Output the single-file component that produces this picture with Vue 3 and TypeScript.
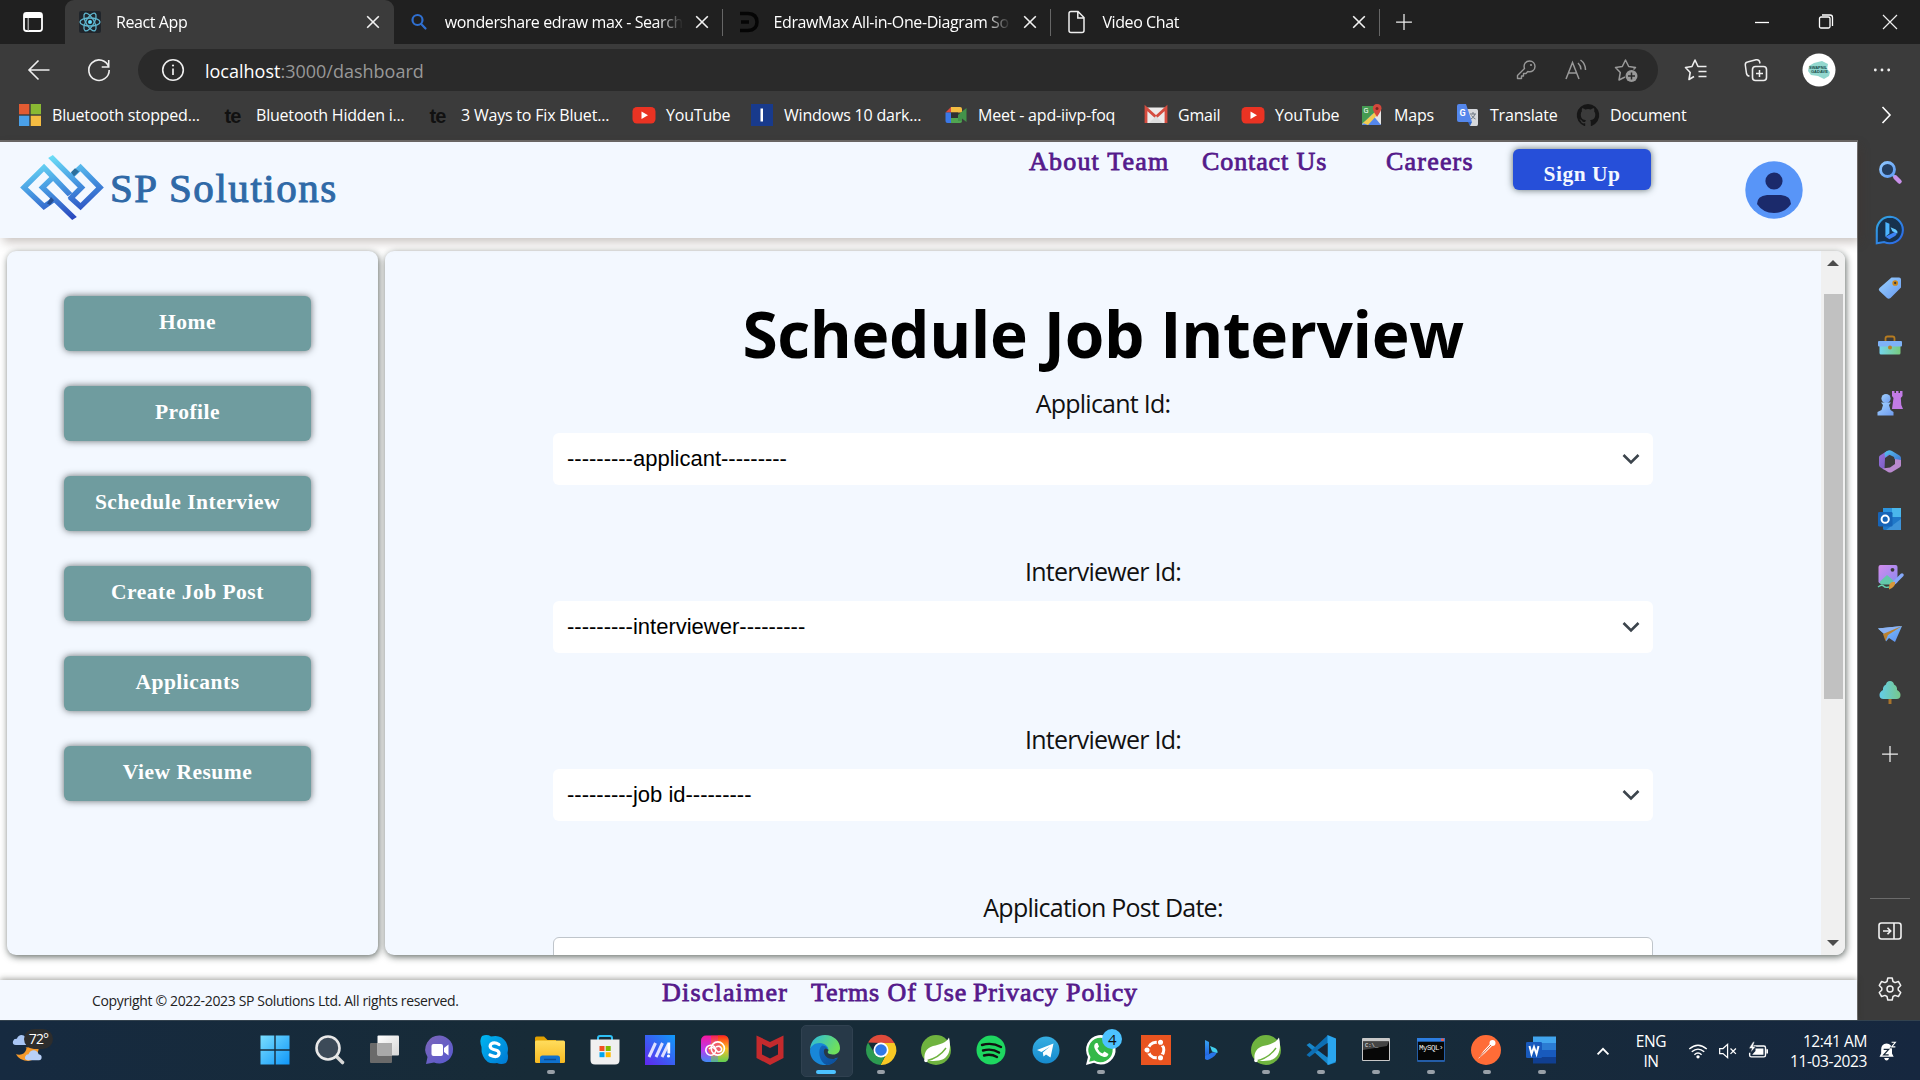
<script setup lang="ts">
interface Tab { icon: string; title: string; active?: boolean }
interface Bookmark { icon: string; label: string; width: number }
interface TaskItem { icon: string; running?: boolean; active?: boolean; badge?: number }

const tabs: Tab[] = [
  { icon: 'react', title: 'React App', active: true },
  { icon: 'searchBlue', title: 'wondershare edraw max - Search' },
  { icon: 'edraw', title: 'EdrawMax All-in-One-Diagram So' },
  { icon: 'file', title: 'Video Chat' },
]

const bookmarks: Bookmark[] = [
  { icon: 'microsoft', label: 'Bluetooth stopped...', width: 204 },
  { icon: 'te', label: 'Bluetooth Hidden i...', width: 205 },
  { icon: 'te', label: '3 Ways to Fix Bluet...', width: 205 },
  { icon: 'youtube', label: 'YouTube', width: 118 },
  { icon: 'bluebar', label: 'Windows 10 dark...', width: 194 },
  { icon: 'meet', label: 'Meet - apd-iivp-foq', width: 200 },
  { icon: 'gmail', label: 'Gmail', width: 97 },
  { icon: 'youtube', label: 'YouTube', width: 119 },
  { icon: 'maps', label: 'Maps', width: 96 },
  { icon: 'translate', label: 'Translate', width: 120 },
  { icon: 'github', label: 'Document', width: 130 },
]

const menu = ['Home', 'Profile', 'Schedule Interview', 'Create Job Post', 'Applicants', 'View Resume']

const fields = [
  { label: 'Applicant Id:', value: '---------applicant---------' },
  { label: 'Interviewer Id:', value: '---------interviewer---------' },
  { label: 'Interviewer Id:', value: '---------job id---------' },
]

const sideIcons = ['sbSearch', 'sbBing', 'sbTag', 'sbTools', 'sbChess', 'sb365', 'sbOutlook', 'sbImage', 'sbPlane', 'sbTree']

const tasks: TaskItem[] = [
  { icon: 'start' }, { icon: 'tSearch' }, { icon: 'taskview' }, { icon: 'chat' }, { icon: 'skype' },
  { icon: 'explorer', running: true }, { icon: 'store' }, { icon: 'myasus' }, { icon: 'cc' }, { icon: 'mcafee' },
  { icon: 'edge', running: true, active: true }, { icon: 'chrome', running: true }, { icon: 'spring' },
  { icon: 'spotify' }, { icon: 'telegram' }, { icon: 'whatsapp', running: true, badge: 4 }, { icon: 'ubuntu' },
  { icon: 'bing' }, { icon: 'spring', running: true }, { icon: 'vscode', running: true }, { icon: 'cmd', running: true },
  { icon: 'mysql', running: true }, { icon: 'postman', running: true }, { icon: 'word', running: true },
]

const grad = (id: string, a: string, b: string, dir = 'x2="1" y2="1"') =>
  `<linearGradient id="${id}" ${dir}><stop stop-color="${a}"/><stop offset="1" stop-color="${b}"/></linearGradient>`

// Browser icons share a 24-unit box, taskbar icons a 32-unit box.
const icons: Record<string, string> = {
  workspace: '<rect x="3" y="3" width="18" height="18" rx="2.5" fill="none" stroke="#fff" stroke-width="1.8"/><path d="M3 4.5Q4 3 6 3H18Q21 3 21 6V8H3Z" fill="#fff"/><path d="M7.2 8V21" stroke="#bbb" stroke-width="1.2"/>',
  react: '<rect x="1" y="1" width="22" height="22" rx="2" fill="#20252b"/><g fill="none" stroke="#61b8d0" stroke-width="1.3"><ellipse cx="12" cy="12" rx="10" ry="4"/><ellipse cx="12" cy="12" rx="10" ry="4" transform="rotate(60 12 12)"/><ellipse cx="12" cy="12" rx="10" ry="4" transform="rotate(120 12 12)"/></g><circle cx="12" cy="12" r="2" fill="#61dafb"/>',
  searchBlue: '<g fill="none" stroke="#2f6fd0" stroke-width="2.2" stroke-linecap="round"><circle cx="10.5" cy="10" r="5"/><path d="M14.2 14L18.5 18.5"/></g>',
  edraw: '<path d="M4 3.500H12Q21 4 21 12T12 20.500H4M5 12H13" fill="none" stroke="#050505" stroke-width="3.500"/>',
  file: '<path d="M5 3.500Q5 1.500 7 1.500H14L20 7.500V20.500Q20 22.500 18 22.500H7Q5 22.500 5 20.500ZM13.800 1.800V8H19.800" fill="none" stroke="#eee" stroke-width="1.500"/>',
  close: '<path d="M6.200 6.200L17.800 17.800M17.800 6.200L6.200 17.800" stroke="#f2f2f2" stroke-width="1.600"/>',
  plus: '<path d="M12 2.500V21.500M2.500 12H21.500" stroke="#eee" stroke-width="1.500"/>',
  back: '<path d="M22.500 12H2M11.500 2.500L2 12L11.500 21.500" fill="none" stroke="#eee" stroke-width="1.600"/>',
  reload: '<path d="M21.700 9A10.200 10.200 0 1 0 22.200 12M21.700 2V9H14.700" fill="none" stroke="#eee" stroke-width="1.600"/>',
  info: '<circle cx="12" cy="12" r="10.300" fill="none" stroke="#eee" stroke-width="1.600"/><path d="M12 10.500V17" stroke="#eee" stroke-width="1.700"/><circle cx="12" cy="7.500" r="1.100" fill="#eee"/>',
  key: '<path d="M10.500 10.500C9 6 12 3 15.500 3C19 3 21 5.500 21 8.500C21 12 18 14.500 13.800 13.500L12 15.500H9.500V18H7.500V20.500H3.500V17.500Z" fill="none" stroke="#999" stroke-width="1.400" stroke-linejoin="round"/><circle cx="17" cy="7" r="1.100" fill="#999"/>',
  read: '<path d="M2 21L8.500 4.500L15 21M4.400 15H12.600M14 5Q16.800 7.500 17 11.500M16.500 2Q21.500 5.500 21.500 12" fill="none" stroke="#999" stroke-width="1.500"/>',
  starAdd: '<path d="M11 19L5 22L6.300 14.500L1.500 9.500L8.300 8.500L11.500 2L14.700 8.500L21.500 9.500L19.500 11.500" fill="none" stroke="#999" stroke-width="1.500" stroke-linejoin="round"/><circle cx="17.500" cy="18" r="6" fill="#999"/><path d="M17.500 14.500V21.500M14 18H21" stroke="#2a2a2a" stroke-width="1.500"/>',
  favs: '<path d="M10 18.500L5 21.500L6.200 14.500L1.500 9.500L8 8.500L11 2L14 8.500H22.500M14.500 13.500H22.500M14.500 18.500H22.500" fill="none" stroke="#eee" stroke-width="1.600" stroke-linejoin="round"/>',
  collections: '<rect x="8.500" y="8.500" width="14" height="14" rx="3" fill="none" stroke="#eee" stroke-width="1.600"/><path d="M15.500 12V19M12 15.500H19M5.500 18Q3 18 2.500 15.500L1.300 7Q1 4.500 3.500 4L12 1.800Q15 1.200 15.700 4L16 5.500" fill="none" stroke="#eee" stroke-width="1.500"/>',
  dots: '<g fill="#eee"><circle cx="4" cy="12" r="1.700"/><circle cx="12" cy="12" r="1.700"/><circle cx="20" cy="12" r="1.700"/></g>',
  min: '<path d="M5 12.500H19" stroke="#fff" stroke-width="1.300"/>',
  max: '<rect x="5.500" y="7" width="10.500" height="11" rx="1.500" fill="none" stroke="#fff" stroke-width="1.300"/><path d="M8 5H16Q18.500 5 18.500 7.500V16" fill="none" stroke="#fff" stroke-width="1.300"/>',
  closeWin: '<path d="M5 5L19 19M19 5L5 19" stroke="#eee" stroke-width="1.200"/>',
  chevron: '<path d="M8.500 4L16 12L8.500 20" fill="none" stroke="#fff" stroke-width="1.600"/>',
  microsoft: '<path d="M1 1H11.300V11.300H1Z" fill="#e25b32"/><path d="M12.700 1H23V11.300H12.700Z" fill="#8ab933"/><path d="M1 12.700H11.300V23H1Z" fill="#4aa0e8"/><path d="M12.700 12.700H23V23H12.700Z" fill="#f5bc42"/>',
  te: '<text x="2.500" y="20" font-family="Liberation Sans" font-weight="700" font-size="20" letter-spacing="-1" fill="#111">te</text>',
  youtube: '<rect x="0.500" y="4" width="23" height="16.500" rx="4.500" fill="#ea3323"/><path d="M9.500 8.500V16L16 12.200Z" fill="#fff"/>',
  bluebar: '<path d="M1 1H23V23H1Z" fill="#183a8c"/><path d="M10.500 5.500H13V18.500H10.500Z" fill="#fff"/>',
  meet: '<path d="M7 4H16Q18 4 18 6V9.500H7Z" fill="#f3bc42"/><path d="M7 4V9.500H1.500Z" fill="#dc4a3d"/><path d="M1.500 9.500H7V20H3.500Q1.500 20 1.500 18Z" fill="#3b78e7"/><path d="M7 15H18V18Q18 20 16 20H7Z" fill="#50a551"/><path d="M14 12L18 8.500L22.500 5V19L18 15.500V18H14Z" fill="#43924a"/><path d="M7 9.500H14V15H7Z" fill="#303030"/>',
  gmail: '<path d="M2 4.500H22V20H2Z" fill="#eceaea"/><path d="M2 20V5L12 14L22 5V20" fill="none" stroke="#d54c3f" stroke-width="2.800"/><path d="M5 20L12 13L19 20Z" fill="#ddd"/>',
  maps: '<rect x="2" y="3" width="19" height="19" rx="1.500" fill="#e6e6e6"/><path d="M2 3H15L15 10L2 21Z" fill="#459b52"/><path d="M2 22L12 11L21 22Z" fill="#5487ec"/><path d="M3 20L16 8L18 11L8 22Z" fill="#f3cc52"/><path d="M17 1Q21.500 1 21.500 5.500Q21 8 17 14Q13 8 12.800 5.500Q13 1 17 1Z" fill="#d4483c"/><circle cx="17" cy="5.500" r="1.500" fill="#7c231e"/><text x="3.500" y="10" font-family="Roboto" font-size="7.500" fill="#fff">G</text>',
  translate: '<path d="M11 6H20.500Q22 6 22 8V21Q22 23 20.500 23H14Z" fill="#d6d8dc"/><path d="M3 1H10L16 19H3Q1 19 1 17V3Q1 1 3 1Z" fill="#5487ec"/><path d="M12 19H16L14 23Z" fill="#3367c8"/><path d="M14 11H20M17 9V11M19 11Q18 14.500 15 16M15.500 12.500Q17 15 19.500 16" stroke="#6f7984" fill="none"/><text x="3.500" y="12.500" font-family="Roboto" font-weight="700" font-size="9" fill="#fff">G</text>',
  github: '<path d="M12 1A11.300 11.300 0 0 0 8.400 23C9 23.100 9.200 22.700 9.200 22.400V20.300C6 21 5.300 18.900 5.300 18.900C4.800 17.600 4 17.200 4 17.200C3 16.500 4.100 16.500 4.100 16.500C5.300 16.600 5.900 17.700 5.900 17.700C7 19.500 8.700 19 9.300 18.700C9.400 17.900 9.700 17.400 10.100 17.100C7.500 16.800 4.800 15.800 4.800 11.400C4.800 10.100 5.200 9.100 6 8.300C5.900 8 5.500 6.900 6.100 5.300C6.100 5.300 7.100 5 9.200 6.500A11 11 0 0 1 14.900 6.500C17 5 18 5.300 18 5.300C18.600 6.900 18.200 8 18.100 8.300C18.900 9.100 19.300 10.200 19.300 11.400C19.300 15.800 16.600 16.800 14 17.100C14.400 17.500 14.800 18.200 14.800 19.200V22.400C14.800 22.700 15 23.100 15.600 23A11.300 11.300 0 0 0 12 1Z" fill="#161616"/>',

  sbSearch: grad('sa', '#8fc7ff', '#5d9bf5') + '<circle cx="9.500" cy="9.500" r="7" fill="#243e60" stroke="url(#sa)" stroke-width="2.800"/><path d="M15 15L17.500 17.500" stroke="#78aef8" stroke-width="2.500"/><path d="M17.500 17.500L21.500 21.500" stroke="#c990ea" stroke-width="4.500" stroke-linecap="round"/>',
  sbBing: grad('sbg', '#33a8e0', '#2b65e8') + '<g transform="translate(12 12) scale(1.15) translate(-12 -12)"><path d="M12 .5A11.500 11.500 0 1 1 7 22.500L.5 23.500V12A11.500 11.500 0 0 1 12 .5Z" fill="#17324e" stroke="url(#sbg)" stroke-width="1.800"/><path d="M8 5L11.500 6.500V15L8 17.800Z" fill="#4bb5ff"/><path d="M8 17.800L17 13.200Q19 15.500 16 17.500L11.500 20Z" fill="#3d83f5"/><path d="M12.500 9.500L17 11.500Q19 13 18.500 15L14 13Z" fill="#65c8ff"/></g>',
  sbTag: grad('sc', '#9ad1ff', '#6799ef') + '<path d="M13.500 1.500H21Q23 1.500 23 3.500V11.500L12.500 22Q10.500 23.500 9 22L1.500 15Q0 13.500 1.500 12Z" fill="url(#sc)"/><circle cx="17.200" cy="7" r="2" fill="#3c3c3c" stroke="#cf8818" stroke-width="1.700"/>',
  sbTools: grad('sd', '#74d5ee', '#78cb7d', 'x2="1"') + '<path d="M7.500 9V5.500Q7.500 3.500 9.500 3.500H14.500Q16.500 3.500 16.500 5.500V9" fill="none" stroke="#b67b20" stroke-width="1.800"/><path d="M1.500 12H22.500V20Q22.500 21.500 21 21.500H3Q1.500 21.500 1.500 20Z" fill="url(#sd)"/><rect x="0" y="8" width="24" height="5.500" rx="1" fill="#7eb2f7"/><circle cx="12" cy="14.500" r="2" fill="#ba8226"/>',
  sbChess: grad('se', '#a2d2ff', '#6e9bee') + '<path d="M14 0H16.500V2H18V0H20.500V2H22V0H24.500V5L22.800 7L23.300 14L25 18H14L15.500 7L14 5Z" fill="#c27be6"/><circle cx="8" cy="7.500" r="4.600" fill="url(#se)"/><path d="M3 11.500H13L11 14L12.500 19L15.500 21V24.500H-.5V21L3.500 19L5 14Z" fill="url(#se)"/>',
  sb365: grad('sf', '#56c3ee', '#3c6fd0') + grad('sg', '#9a72dc', '#7055bd') + '<path d="M9 2L2 6.500Q1 7.200 1 8.500V16Q1 17.500 2.300 18.300L6.500 21L7 9L13 5Z" fill="url(#sg)"/><path d="M9 2Q11.500 .5 14 2L21.500 6.500Q23 7.500 23 9V14L16.500 10L16 8L11 5.500L7 8.500L6.500 4Z" fill="url(#sf)"/><path d="M23 11V16.500Q23 17.500 21.500 18.500L14 23Q12 24 10 23L4.500 19.500L12 18.500L17 15V10Z" fill="#b989ce"/>',
  sbOutlook: '<rect x="5" y="1" width="18" height="22" rx="1.500" fill="#1f78c8"/><path d="M14 1H23V10H14Z" fill="#4ab7ec"/><path d="M5 1H14V8H5Z" fill="#2c94de"/><path d="M8 23L23 12V23Z" fill="#3e93d8"/><rect x="0" y="5" width="14.500" height="14.500" rx="1.300" fill="#1764b7"/><circle cx="7.200" cy="12.200" r="3.600" fill="none" stroke="#fff" stroke-width="2"/>',
  sbImage: grad('sh', '#d38cec', '#8a8af1') + '<rect x=".5" y="0" width="19" height="18.500" rx="2" fill="url(#sh)"/><path d="M1.500 17L9 10L16 16L14 19.500H3Z" fill="#62c8a8"/><circle cx="14.500" cy="4.800" r="1.900" fill="#3b3b3b"/><path d="M24 10L16 18" stroke="#85a9fa" stroke-width="3.500" stroke-linecap="round"/><path d="M17 17Q18 22 11 24.500Q11 22 11.500 19Q14 16 17 17Z" fill="#d8983c"/><path d="M0 22Q4 19 5.500 21T11 22" fill="none" stroke="#65d0ab" stroke-width="1.400"/>',
  sbPlane: grad('si', '#82c9ff', '#5b8ef0') + '<path d="M0 6.500L24 4L17 20L11 16L8 19.500L6 12Z" fill="url(#si)"/><path d="M0 6.500L24 4L6 11.500Z" fill="#8cb2f3"/><path d="M24 4L5 12L7.500 19L10 13Z" fill="#ba8130"/>',
  sbTree: grad('sj', '#63cdea', '#77c88a', 'x2="1"') + '<path d="M10.500 17H13.500V24H10.500Z" fill="#a8732b"/><path d="M12 1Q15.500 1 16 4.500Q19.500 6 19 10Q22.500 12 22.500 15Q22.500 19 18.500 19H5.500Q1.500 19 1.500 15Q1.500 12 5 10Q4.500 6 8 4.500Q8.500 1 12 1Z" fill="url(#sj)"/>',
  panel: '<g fill="none" stroke="#f2f2f2" stroke-width="1.600"><rect x="1" y="4" width="22" height="16" rx="2.500"/><path d="M16 4V20M5 12H12.500M9.500 8.800L12.700 12L9.500 15.200"/></g>',
  gear: '<g fill="none" stroke="#f2f2f2" stroke-width="1.500" stroke-linejoin="round"><circle cx="12" cy="12" r="3"/><path d="M9.800 1H14.200L15 4.500L17 5.600L20.400 4.500L22.700 8.400L20.200 11V13L22.700 15.600L20.400 19.500L17 18.400L15 19.500L14.200 23H9.800L9 19.500L7 18.400L3.600 19.500L1.300 15.600L3.800 13V11L1.300 8.400L3.600 4.500L7 5.600L9 4.500Z"/></g>',

  start: grad('ta', '#7fe1ff', '#0a93f8', 'gradientUnits="userSpaceOnUse" x1="0" y1="0" x2="32" y2="32"') + '<path d="M1.500 1.500H15.300V15.300H1.500ZM16.700 1.500H30.500V15.300H16.700ZM1.500 16.700H15.300V30.500H1.500ZM16.700 16.700H30.500V30.500H16.700Z" fill="url(#ta)"/>',
  tSearch: '<path d="M22 22L28.500 28.500" stroke="#d8d8d8" stroke-width="3.600" stroke-linecap="round"/><circle cx="14" cy="14" r="11.500" fill="#3c4a58" stroke="#e8e8e8" stroke-width="2.600"/>',
  taskview: grad('tb', '#ffffff', '#d6d6d6') + '<rect x="1" y="9" width="22" height="20" rx="1" fill="#6a6a6a"/><rect x="8.500" y="1.500" width="21.500" height="20" rx="1" fill="url(#tb)"/><path d="M8.500 9H23V21.500H8.500Z" fill="#a9a9a9"/>',
  chat: grad('tc', '#7c66b8', '#5759d0') + '<path d="M16 1.500A14 14 0 1 1 10 28.500L2 30L3.500 23A14 14 0 0 1 16 1.500Z" fill="url(#tc)"/><rect x="7.500" y="10" width="11.500" height="12" rx="2" fill="#fff"/><path d="M20 14L24.500 10.500V21.500L20 18Z" fill="#fff"/>',
  skype: grad('td', '#00b7f0', '#0078d4') + '<path d="M3 2Q8 0 12 2.500Q22 0 27 8Q30 14 28.500 19Q30 25 27 29Q22 31 18 29Q8 31 4 22Q2 18 2.500 13Q0 6 3 2Z" fill="url(#td)"/><path d="M20 10.500Q15.500 7.500 12 10Q10 12.500 12.500 14.500Q14 15.500 16.500 16Q20.500 17 20 20Q18.500 24.500 11 21" fill="none" stroke="#fff" stroke-width="3.200" stroke-linecap="round"/>',
  explorer: grad('te1', '#ffdd5d', '#f7b921', 'y2="1" x2="0"') + '<path d="M1 4Q1 2.500 2.500 2.500H10L13.500 6H22V14H1Z" fill="#e0a000"/><rect x="1" y="6.500" width="30" height="22.500" rx="1.500" fill="url(#te1)"/><path d="M6 29V24Q6 21.500 8.500 21.500H23.500Q26 21.500 26 24V29Z" fill="#0f71ce"/><path d="M10 25.500H22" stroke="#0a4c94" stroke-width="1.500"/>',
  store: '<path d="M9 7V4Q9 2 11 2H21Q23 2 23 4V7" fill="none" stroke="#2ec0f5" stroke-width="2"/><path d="M1.500 5.500H30.500V26Q30.500 30.500 26 30.500H6Q1.500 30.500 1.500 26Z" fill="#f0f0f0"/><path d="M10.500 12H15.500V17H10.500Z" fill="#f25022"/><path d="M16.700 12H21.700V17H16.700Z" fill="#7fba00"/><path d="M10.500 18.200H15.500V23.200H10.500Z" fill="#00a4ef"/><path d="M16.700 18.200H21.700V23.200H16.700Z" fill="#ffb900"/>',
  myasus: grad('tg', '#6225ee', '#0f9bf8', 'x1="0" y1="1" x2="1" y2="0"') + '<path d="M1 1H31V31H1Z" fill="url(#tg)"/><path d="M5 23L11.500 9M12 23L18.500 9M18 23L24.500 10" fill="none" stroke="#dfe0ff" stroke-width="3"/><path d="M24.800 8.500V19.500" stroke="#fff" stroke-width="2.800"/><circle cx="24.500" cy="22" r="1.600" fill="#fff"/>',
  cc: grad('th', '#ff2b2b', '#4b7bf8', 'x2="0" y2="1"') + '<linearGradient id="ti" x2="0" y2="1"><stop stop-color="#ff2a10"/><stop offset=".5" stop-color="#ffc81c"/><stop offset="1" stop-color="#5fd24a"/></linearGradient><linearGradient id="tn" x2="0" y2="1"><stop stop-color="#f6189e"/><stop offset=".55" stop-color="#b83cf0"/><stop offset="1" stop-color="#3f8bf5"/></linearGradient><linearGradient id="to" x2="1"><stop offset=".25" stop-color="#fff" stop-opacity="0"/></linearGradient><rect x="2" y="1.500" width="27.500" height="26.500" rx="5" fill="url(#tn)"/><path d="M12 1.500H24.500Q29.500 1.500 29.500 6.500V23Q29.500 28 24.500 28H12Z" fill="url(#ti)" opacity=".55"/><path d="M19 1.500H24.500Q29.500 1.500 29.500 6.500V23Q29.500 28 24.500 28H19Z" fill="url(#ti)" opacity=".9"/><circle cx="15.800" cy="15" r="7" fill="#ef5d6a"/><g fill="none" stroke="#fff" stroke-width="1.600"><circle cx="18.800" cy="14.500" r="6.600"/><circle cx="11.800" cy="16.200" r="5"/><path d="M10 15Q13 12 16 15L19 18Q23 18 22.500 14.500Q21 11 17 13"/></g>',
  mcafee: '<path d="M2.500 1.500L16 8L29.500 1.500V24L16 31L2.500 24Z" fill="#c42a2d"/><path d="M8 10L16 14L24 10V20.500L16 24.500L8 20.500Z" fill="#172737"/>',
  edge: grad('tj', '#27b7e6', '#6fe05c', 'x2="1" y2=".4"') + grad('tk', '#1467bd', '#0b4c95') + '<path d="M1 15C2 6 8 1 16 1C25 1 31 7.500 31 14C31 18.500 27.500 21 23.500 20.500C19.500 20.200 17.500 18.500 19.500 16.500C19 11 8 7.500 1 15Z" fill="url(#tj)"/><path d="M1 16C2 10.500 9 7.500 15 10C18 11.200 19.700 14 19.300 16.500C18.500 13.500 15.500 13.500 14.500 16C13 21 17 26 23 25.500Q26 25 28.500 23.500C25 30 19 31.500 14 31C6 30 .5 23.500 1 16Z" fill="#1887d8"/><path d="M13 11.500C8 15 10 28 17.500 31C23 31 27 27.500 29 23.500C22 27.500 14.500 23 14.800 17C15 15 16.500 14 18 14Q17 11.500 13 11.500Z" fill="url(#tk)"/>',
  chrome: '<path d="M3 8.500A15 15 0 0 1 29.500 9H16Z" fill="#df4b3b"/><path d="M29.500 9A15 15 0 0 1 15.500 31L22 19L16 9Z" fill="#f8c824"/><path d="M3 8.500L10 20L16 23L20 22L15.500 31A15 15 0 0 1 3 8.500Z" fill="#2c9b51"/><circle cx="16" cy="16" r="7.500" fill="#fff"/><circle cx="16" cy="16" r="5.800" fill="#3078e7"/>',
  spring: '<circle cx="16" cy="16" r="15" fill="#6fb33f"/><path d="M29 3.500C31.500 14 29.500 25 19 26.500C13 27.500 8 26 5 28C3 20 6 14 13 12C20 10.500 26 9 29 3.500Z" fill="#fff"/><path d="M6 27Q19 24 26 14" fill="none" stroke="#6fb33f" stroke-width="1.400"/><circle cx="6" cy="26.500" r="1.700" fill="#fff"/>',
  spotify: '<circle cx="16" cy="16" r="14.500" fill="#1ed760"/><path d="M7 11Q17 8 26 13M8 16.500Q17 14 24 18.500M9 21.500Q16 19.500 22 23" fill="none" stroke="#111" stroke-width="2.400" stroke-linecap="round"/>',
  telegram: grad('tl', '#36aee2', '#168acd', 'x2="0" y2="1"') + '<circle cx="16" cy="16" r="13.500" fill="url(#tl)"/><path d="M7 16L23.500 9.500L20.500 23.500L16 20.500L13.500 22.500L12.800 18.500L20 12.500L11.500 18Z" fill="#fff"/>',
  whatsapp: '<path d="M1 31L3 23A14.800 14.800 0 1 1 9 28.800Z" fill="#fff"/><path d="M4.200 27.800L5.500 23A12.200 12.200 0 1 1 9.300 26.500Z" fill="#34b849"/><path d="M11 9Q8.500 10.500 9.500 14Q12 21 19 23Q22.500 23.500 23.500 20L19.500 17.500L17.500 19.500Q14 18 12.500 14.500L14 12.500L12.500 9Z" fill="#fff"/>',
  ubuntu: '<path d="M1 1H31V31H1Z" fill="#e95420"/><circle cx="16" cy="16" r="7.800" fill="none" stroke="#fff" stroke-width="3"/><g fill="#fff" stroke="#e95420" stroke-width="1.300"><circle cx="7" cy="16" r="3.200"/><circle cx="20.500" cy="8.200" r="3.200"/><circle cx="20.500" cy="23.800" r="3.200"/></g>',
  bing: grad('tm', '#36a4f3', '#1e54dc', 'x2="0" y2="1"') + '<path d="M10 6L14 8V20L10 25Z" fill="url(#tm)"/><path d="M10 25V22L17 18.500L22 18Q21 22 14 25.500Q12 26.500 10 25Z" fill="#2874e8"/><path d="M15 12L20 14Q23 16 22.500 19L17 17.500Z" fill="#42cfee"/>',
  vscode: '<path d="M1.500 11L4.500 9L31 28.500L23.500 31Z" fill="#1787cb"/><path d="M1.500 21L4.500 23L23 9V1Z" fill="#0d6fb4"/><path d="M22.500 1L31 4.500V27.500L22.500 31Z" fill="#2aa5ee"/><path d="M22.500 9L12.500 16L22.500 23.500Z" fill="#172737"/>',
  cmd: '<rect x="2" y="4" width="28" height="23" rx="1" fill="#c8c8c8"/><path d="M3 7.500H29V26H3Z" fill="#070707"/><path d="M3 7.500H29L27 12L3 16Z" fill="#444"/><text x="5" y="12.500" font-family="Liberation Mono" font-size="5.500" fill="#eee">C:\\_</text>',
  mysql: '<rect x="2" y="4" width="28" height="24" rx="1" fill="#245da7"/><path d="M3 7.500H29V26H3Z" fill="#060606"/><path d="M2 4H30V7.500H2Z" fill="#2c7de0"/><path d="M26 4.500H29V7H26Z" fill="#e35c4e"/><text x="4" y="16" font-family="Liberation Mono" font-size="7.500" letter-spacing="-.5" fill="#eee">MySQL›</text>',
  postman: '<circle cx="16" cy="16" r="15" fill="#ff6c37"/><path d="M8 25L13.500 17L20 10L22 12L15 19Z" fill="#fff"/><circle cx="22.500" cy="9" r="3" fill="#fff"/><path d="M9.500 23L21 11" stroke="#d95a30"/>',
  word: '<path d="M8 2.500H31V9H8Z" fill="#41a5ee"/><path d="M8 9H31V16H8Z" fill="#2b7cd3"/><path d="M8 16H31V23H8Z" fill="#185abd"/><path d="M8 23H31V29.500H8Z" fill="#103f91"/><rect x="1" y="8" width="16" height="16" rx="1.300" fill="#185abd"/><path d="M4.500 12L6.500 20L9 13L11.500 20L13.500 12" fill="none" stroke="#fff" stroke-width="2"/>',
  weather: '<path d="M13 15Q25 13 26.500 17Q24 28 16 29Q7 29 3 22Q12 24 14 16Z" fill="#f69a2b"/><path d="M3 12.500Q-1 12 0 8.500Q1 5.500 4 6Q6 1 11 2.500Q15 4 14.500 12.500Z" fill="#a8c5f4"/><path d="M15 28Q11.500 27.500 12.500 24.500Q13.500 22 16 22Q18 17 23 18Q26 19 26.500 22Q30 22.500 29.500 26Q29 28 27 28Z" fill="#b9d0f8"/>',
  up: '<path d="M5.500 16L12 9.500L18.500 16" fill="none" stroke="#fff" stroke-width="2.200"/>',
  wifi: '<g fill="none" stroke="#fff" stroke-width="1.700"><path d="M1.500 9.500Q12 .5 22.500 9.500M4.500 13Q12 6.500 19.500 13M7.700 16.500Q12 12.500 16.300 16.500"/></g><circle cx="12" cy="19" r="2" fill="#fff"/>',
  mute: '<g fill="none" stroke="#fff" stroke-width="1.500"><path d="M2 9H6L11.500 4V20L6 15H2ZM15 9L21.500 15.500M21.500 9L15 15.500"/></g>',
  battery: '<path d="M6 6H19Q21 6 21 8V17Q21 19 19 19H4Q2 19 2 17V14" fill="none" stroke="#fff" stroke-width="1.700"/><path d="M22 10H24V15H22Z" fill="#fff"/><path d="M9 9H18.500V16.500H5L9 12Z" fill="#fff"/><path d="M6 1L1 9H4.500L3 14L9.500 6.500H6L8 1Z" fill="#fff" stroke="#172737" stroke-width=".6"/>',
  bell: '<path d="M3 19L5 15V10Q5 3.500 11.500 3Q18 3.500 18 10V15L20 19Z" fill="#fff"/><path d="M8.500 20.500H14.500Q13.500 23.500 11.500 23.500T8.500 20.500Z" fill="#fff"/><path d="M8 10H14L8 16.500H14M16.500 2H21L16.500 8H21" fill="none" stroke="#172737" stroke-width="1.500"/><path d="M17.500 1.500H22L17.500 7H22" fill="none" stroke="#fff" stroke-width="1.400"/>',
}
</script>

<template>
  <div class="screen">
    <div class="tabbar">
      <div class="workspace"><svg class="i24" viewBox="0 0 24 24" v-html="icons.workspace" /></div>
      <div v-for="(t, i) in tabs" :key="i" class="tab" :class="{ active: t.active }">
        <svg class="i24" viewBox="0 0 24 24" v-html="icons[t.icon]" />
        <span class="tab-title">{{ t.title }}</span>
        <svg class="i24" viewBox="0 0 24 24" v-html="icons.close" />
      </div>
      <svg class="newtab" viewBox="0 0 24 24" v-html="icons.plus" />
      <div class="wincontrols">
        <svg class="i24" viewBox="0 0 24 24" v-html="icons.min" />
        <svg class="i24" viewBox="0 0 24 24" v-html="icons.max" />
        <svg class="i24" viewBox="0 0 24 24" v-html="icons.closeWin" />
      </div>
    </div>

    <div class="toolbar">
      <svg class="i24 back" viewBox="0 0 24 24" v-html="icons.back" />
      <svg class="i24 reload" viewBox="0 0 24 24" v-html="icons.reload" />
      <div class="address">
        <svg class="i24" viewBox="0 0 24 24" v-html="icons.info" />
        <span class="url"><b>localhost</b>:3000/dashboard</span>
        <div class="address-actions">
          <svg class="i24" viewBox="0 0 24 24" v-html="icons.key" />
          <svg class="i24" viewBox="0 0 24 24" v-html="icons.read" />
          <svg class="i24" viewBox="0 0 24 24" v-html="icons.starAdd" />
        </div>
      </div>
      <div class="toolbar-actions">
        <svg class="i24" viewBox="0 0 24 24" v-html="icons.favs" />
        <svg class="i24" viewBox="0 0 24 24" v-html="icons.collections" />
        <svg class="profile" viewBox="0 0 34 34">
          <circle cx="17" cy="17" r="16.500" fill="#fff" />
          <path d="M7 13L12 10L20 8L26 11L25 16L28 19L27 23L22 26L16 23L9 22L6 18Z" fill="#93d8cf" />
          <text x="7" y="15.500" font-family="Liberation Sans" font-weight="700" font-size="4" fill="#174b4a">SWAPNIL</text>
          <text x="9" y="20" font-family="Liberation Sans" font-weight="700" font-size="4" fill="#174b4a">GADAVE</text>
        </svg>
        <svg class="i20" viewBox="0 0 24 24" v-html="icons.dots" />
      </div>
    </div>

    <div class="bookmarks">
      <div v-for="(b, i) in bookmarks" :key="i" class="bookmark" :style="{ width: b.width + 'px' }">
        <svg class="i24" viewBox="0 0 24 24" v-html="icons[b.icon]" />
        <span>{{ b.label }}</span>
      </div>
      <svg class="i24 more" viewBox="0 0 24 24" v-html="icons.chevron" />
    </div>

    <div class="content">
      <div class="page">
        <header class="header">
          <svg class="logo" viewBox="0 0 84 84" preserveAspectRatio="none">
            <defs>
              <linearGradient id="lg" x1="30" y1="0" x2="56" y2="84" gradientUnits="userSpaceOnUse">
                <stop stop-color="#6fe3f8" /><stop offset=".45" stop-color="#479ae2" /><stop offset="1" stop-color="#2740bb" />
              </linearGradient>
            </defs>
            <g fill="none" stroke="url(#lg)" stroke-width="6">
              <path d="M30.500 3L61.500 42L50 56.500" />
              <path d="M54.500 81L22.500 42L33 29" />
              <path d="M52 27L60.500 17L80 42L60.500 66L50 54" />
              <path d="M33 58L24 66L4 42L24 17L50 51" />
            </g>
            <path d="M51 23L55 18L59 22L54 28Z" fill="#2d6f9c" />
            <path d="M27 62L31 54L34 58L30 64Z" fill="#274f91" />
          </svg>
          <span class="brand">SP Solutions</span>
          <nav class="nav">
            <a class="about">About Team</a>
            <a class="contact">Contact Us</a>
            <a class="careers">Careers</a>
          </nav>
          <button class="signup">Sign Up</button>
          <svg class="avatar" viewBox="0 0 58 58">
            <circle cx="29" cy="29" r="28.700" fill="#5895f8" />
            <circle cx="29" cy="20" r="8.600" fill="#1b2a6b" />
            <path d="M22 34H36Q46 35 46 43Q40 52 29 52T12 43Q12 35 22 34Z" fill="#1b2a6b" />
          </svg>
        </header>

        <main class="main">
          <aside class="menu">
            <button v-for="m in menu" :key="m">{{ m }}</button>
          </aside>
          <section class="panel">
            <div class="form">
              <h1>Schedule Job Interview</h1>
              <div v-for="(f, i) in fields" :key="i" class="field">
                <label>{{ f.label }}</label>
                <div class="select">
                  <span>{{ f.value }}</span>
                  <svg viewBox="0 0 18 12"><path d="M1.500 2L9 9.500L16.500 2" fill="none" stroke="#3c444c" stroke-width="2.600" /></svg>
                </div>
              </div>
              <div class="field">
                <label>Application Post Date:</label>
                <div class="input"></div>
              </div>
            </div>
            <div class="scrollbar">
              <span class="arrow-up"></span>
              <div class="track"><div class="thumb"></div></div>
              <span class="arrow-down"></span>
            </div>
          </section>
        </main>

        <footer class="footer">
          <span class="copyright">Copyright © 2022-2023 SP Solutions Ltd. All rights reserved.</span>
          <a class="disclaimer">Disclaimer</a>
          <a class="terms">Terms Of Use</a>
          <a class="privacy">Privacy Policy</a>
        </footer>
      </div>

      <aside class="edgebar">
        <div class="edge-list">
          <svg v-for="s in sideIcons" :key="s" class="i24" viewBox="0 0 24 24" v-html="icons[s]" />
        </div>
        <svg class="edge-plus" viewBox="0 0 24 24" v-html="icons.plus" />
        <div class="edge-bottom">
          <svg class="i24" viewBox="0 0 24 24" v-html="icons.panel" />
          <svg class="i24" viewBox="0 0 24 24" v-html="icons.gear" />
        </div>
      </aside>
    </div>

    <div class="taskbar">
      <div class="weather">
        <svg viewBox="0 0 32 32" v-html="icons.weather" />
        <span>72°</span>
      </div>
      <div class="tasks">
        <div v-for="(t, i) in tasks" :key="i" class="task" :class="{ running: t.running, active: t.active }">
          <svg viewBox="0 0 32 32" v-html="icons[t.icon]" />
          <span v-if="t.badge" class="badge">{{ t.badge }}</span>
        </div>
      </div>
      <div class="tray">
        <svg class="i20 t-up" viewBox="0 0 24 24" v-html="icons.up" />
        <div class="lang">ENG<br />IN</div>
        <svg class="i20" viewBox="0 0 24 24" v-html="icons.wifi" />
        <svg class="i20 t-mute" viewBox="0 0 24 24" v-html="icons.mute" />
        <svg class="i20 t-bat" viewBox="0 0 24 24" v-html="icons.battery" />
        <div class="clock">12:41 AM<br />11-03-2023</div>
        <svg class="i20" viewBox="0 0 24 24" v-html="icons.bell" />
      </div>
    </div>
  </div>
</template>

<style>
body { margin: 0; overflow: hidden; }
</style>

<style scoped>
* { box-sizing: border-box; }
svg { display: block; flex: none; overflow: visible; }
.screen { width: 1920px; height: 1080px; display: flex; flex-direction: column; overflow: hidden; background: #3b3b3b; font-family: "Open Sans", "Noto Sans", sans-serif; font-size: 16px; white-space: nowrap; }
.i24 { width: 24px; height: 24px; }
.i20 { width: 20px; height: 20px; }

.tabbar { height: 44px; flex: none; display: flex; align-items: center; background: #202020; color: #fff; }
.workspace { width: 65px; padding-left: 21px; }
.tab { width: 328.800px; height: 44px; padding: 0 9px 0 13px; display: flex; align-items: center; }
.tab.active { background: #3b3b3b; border-radius: 9px 9px 0 0; }
.tab:not(.active) { background: linear-gradient(#666, #666) right 9px / 1px 27px no-repeat; }
.tab-title { flex: 1; min-width: 0; margin: 0 7px 0 14px; overflow: hidden; letter-spacing: -.4px; mask-image: linear-gradient(90deg, #000 calc(100% - 26px), transparent); }
.newtab { width: 20px; height: 20px; margin-left: 14px; }
.wincontrols { display: flex; gap: 40px; margin-left: auto; margin-right: 18px; }

.toolbar { height: 52px; flex: none; display: flex; align-items: center; padding-left: 27px; }
.reload { margin-left: 36px; }
.address { width: 1520px; height: 42px; margin-left: 27px; padding: 0 20px 0 23px; display: flex; align-items: center; border-radius: 21px; background: #2a2a2a; }
.url { margin-left: 20px; padding-top: 2px; font-size: 18px; letter-spacing: 0; color: #989898; }
.url b { font-weight: 400; color: #fff; }
.address-actions { display: flex; gap: 26px; margin-left: auto; }
.toolbar-actions { display: flex; align-items: center; flex: 1; margin-left: 26px; }
.toolbar-actions svg:nth-child(2) { margin-left: 36px; }
.profile { width: 34px; height: 34px; margin-left: 34px; }
.toolbar-actions svg:last-child { margin-left: 36px; }

.bookmarks { height: 44px; flex: none; display: flex; align-items: center; padding: 0 22px 6px 18px; color: #fff; }
.bookmark { flex: none; display: flex; align-items: center; gap: 10px; font-size: 16px; letter-spacing: -.2px; }
.more { margin-left: auto; }

.content { height: 880px; flex: none; display: flex; }
.page { width: 1858px; display: flex; flex-direction: column; background: #fff; border-top: 2px solid #6b6968; border-right: 1px solid #777; }
.header { position: relative; height: 96px; flex: none; display: flex; align-items: flex-start; background: #f3f8ff; box-shadow: 3px 4px 10px rgba(70, 50, 40, .3); font-family: "Liberation Serif", serif; }
.logo { width: 84px; height: 67px; margin: 12px 0 0 20px; }
.brand { width: 230px; margin: 22px 0 0 6px; font-size: 41px; line-height: 48px; letter-spacing: 1.550px; color: #2f69a7; -webkit-text-stroke: 1px #2f69a7; }
.nav { display: flex; padding: 4px 0 0 689px; font-size: 26px; line-height: 31px; }
.nav, .footer { color: #551a8b; -webkit-text-stroke: .8px #551a8b; }
.nav { flex: none; width: 1173px; letter-spacing: 1.200px; }
.nav a { flex: none; }
.about { width: 173px; }
.contact { width: 184px; letter-spacing: .9px; }
.signup { flex: none; width: 138px; height: 41px; margin-top: 7px; padding: 10px 0 0; border: 0; border-radius: 6px; background: #264fd9; box-shadow: 0 0 7px rgba(30, 50, 50, .7); color: #f3f8ff; font: 700 21.500px/31px "Liberation Serif", serif; letter-spacing: .5px; }
.avatar { width: 58px; height: 58px; margin: 19px 0 0 94px; }

.main { display: flex; gap: 7px; height: 704px; flex: none; margin-top: 13px; padding-left: 7px; }
.menu, .panel { background: #f3f8ff; border-radius: 9px; box-shadow: 1px 2px 7px rgba(20, 30, 25, .65); }
.menu { width: 371px; flex: none; display: flex; flex-direction: column; gap: 35px; padding: 45px 0 0 57px; }
.menu button { width: 247px; height: 55px; padding: 0 0 2px; border: 0; border-radius: 6px; background: #6f9c9f; box-shadow: 0 0 7px rgba(40, 50, 50, .7); color: #fff; font: 700 21.500px/53px "Liberation Serif", serif; letter-spacing: .5px; }
.panel { width: 1460px; flex: none; display: flex; overflow: hidden; }
.form { width: 1436px; flex: none; display: flex; flex-direction: column; align-items: center; }
h1 { margin: 43px 0 2px; font-size: 64px; line-height: 80px; font-weight: 700; letter-spacing: -.35px; color: #000; }
.field { width: 1100px; height: 168px; flex: none; text-align: center; }
.field label { display: block; height: 57px; padding-top: 10px; font-size: 25px; line-height: 34px; letter-spacing: -.75px; color: #111; }
.select { height: 52px; display: flex; align-items: center; justify-content: space-between; padding: 0 13px 0 14px; border-radius: 6px; background: #fff; font: 22px "Liberation Sans", sans-serif; color: #000; }
.select svg { width: 18px; height: 12px; }
.input { height: 52px; border: 1px solid #bfc5cb; border-radius: 6px; background: #fff; }
.scrollbar { width: 24px; display: flex; flex-direction: column; align-items: center; background: #f0f0f0; }
.arrow-up, .arrow-down { border: 6px solid transparent; width: 0; height: 0; }
.arrow-up { margin-top: 3px; border-bottom-color: #4c4c4c; }
.arrow-down { margin-bottom: 3px; border-top-color: #4c4c4c; }
.track { width: 19px; flex: 1; padding-top: 28px; }
.thumb { height: 405px; background: #c1c1c1; }

.footer { height: 40px; margin-top: auto; flex: none; display: flex; align-items: flex-start; background: #f3f8ff; box-shadow: 0 -1px 6px rgba(40, 40, 30, .45); font: 26px/29px "Liberation Serif", serif; letter-spacing: .9px; }
.footer a { margin-top: -2px; }
.copyright { width: 570px; margin: 0 0 0 92px; font: 14px/42px "Open Sans", sans-serif; letter-spacing: -.35px; color: #222; -webkit-text-stroke: 0; }
.disclaimer { width: 149px; letter-spacing: 1.200px; }
.terms { width: 162px; }

.edgebar { width: 62px; padding-left: 1px; display: flex; flex-direction: column; align-items: center; }
.edge-list { display: flex; flex-direction: column; gap: 33.800px; margin-top: 20px; }
.edge-plus { width: 20px; height: 20px; margin-top: 40px; }
.edge-bottom { width: 40px; margin-top: 134px; padding-top: 20px; display: flex; flex-direction: column; align-items: center; gap: 34px; border-top: 1px solid #6b6b6b; }

.taskbar { height: 60px; flex: none; display: flex; border-top: 1px solid #33424e; background: linear-gradient(90deg, #162a40, #172b37 28%, #172b39 72%, #16273f); color: #fff; }
.weather { position: relative; width: 247.500px; flex: none; padding: 12px 0 0 13px; }
.weather svg { width: 31px; height: 31px; }
.weather span { position: absolute; left: 24px; top: 8px; width: 29px; height: 20px; border-radius: 10px; background: #2d2d2d; font-size: 14px; line-height: 20px; text-align: center; letter-spacing: -.8px; }
.tasks { display: flex; flex: none; width: 1321.500px; }
.task { position: relative; width: 55.050px; flex: none; display: flex; justify-content: center; padding-top: 13px; }
.task svg { position: relative; width: 32px; height: 32px; }
.task.active::before { content: ""; position: absolute; left: 3px; top: 4px; width: 50px; height: 50px; border: 1px solid #304150; border-radius: 5px; background: #273948; }
.task.running::after { content: ""; position: absolute; left: 24px; top: 49px; width: 8px; height: 4px; border-radius: 2px; background: #98a0a8; }
.task.active::after { left: 18px; width: 20px; background: #4cc2ff; }
.badge { position: absolute; left: 29px; top: 8px; width: 20px; height: 20px; border-radius: 50%; background: #4cc2ff; color: #111; font-size: 15px; line-height: 20px; text-align: center; }
.tray { display: flex; align-items: center; font-size: 15.500px; line-height: 20px; letter-spacing: -.4px; padding-left: 24px; }
.lang { width: 40px; margin: 0 17px 0 18px; text-align: center; }
.t-mute { margin-left: 10px; }
.t-bat { margin-left: 10px; }
.clock { width: 82px; margin: 0 10px 0 17px; text-align: right; }
</style>
